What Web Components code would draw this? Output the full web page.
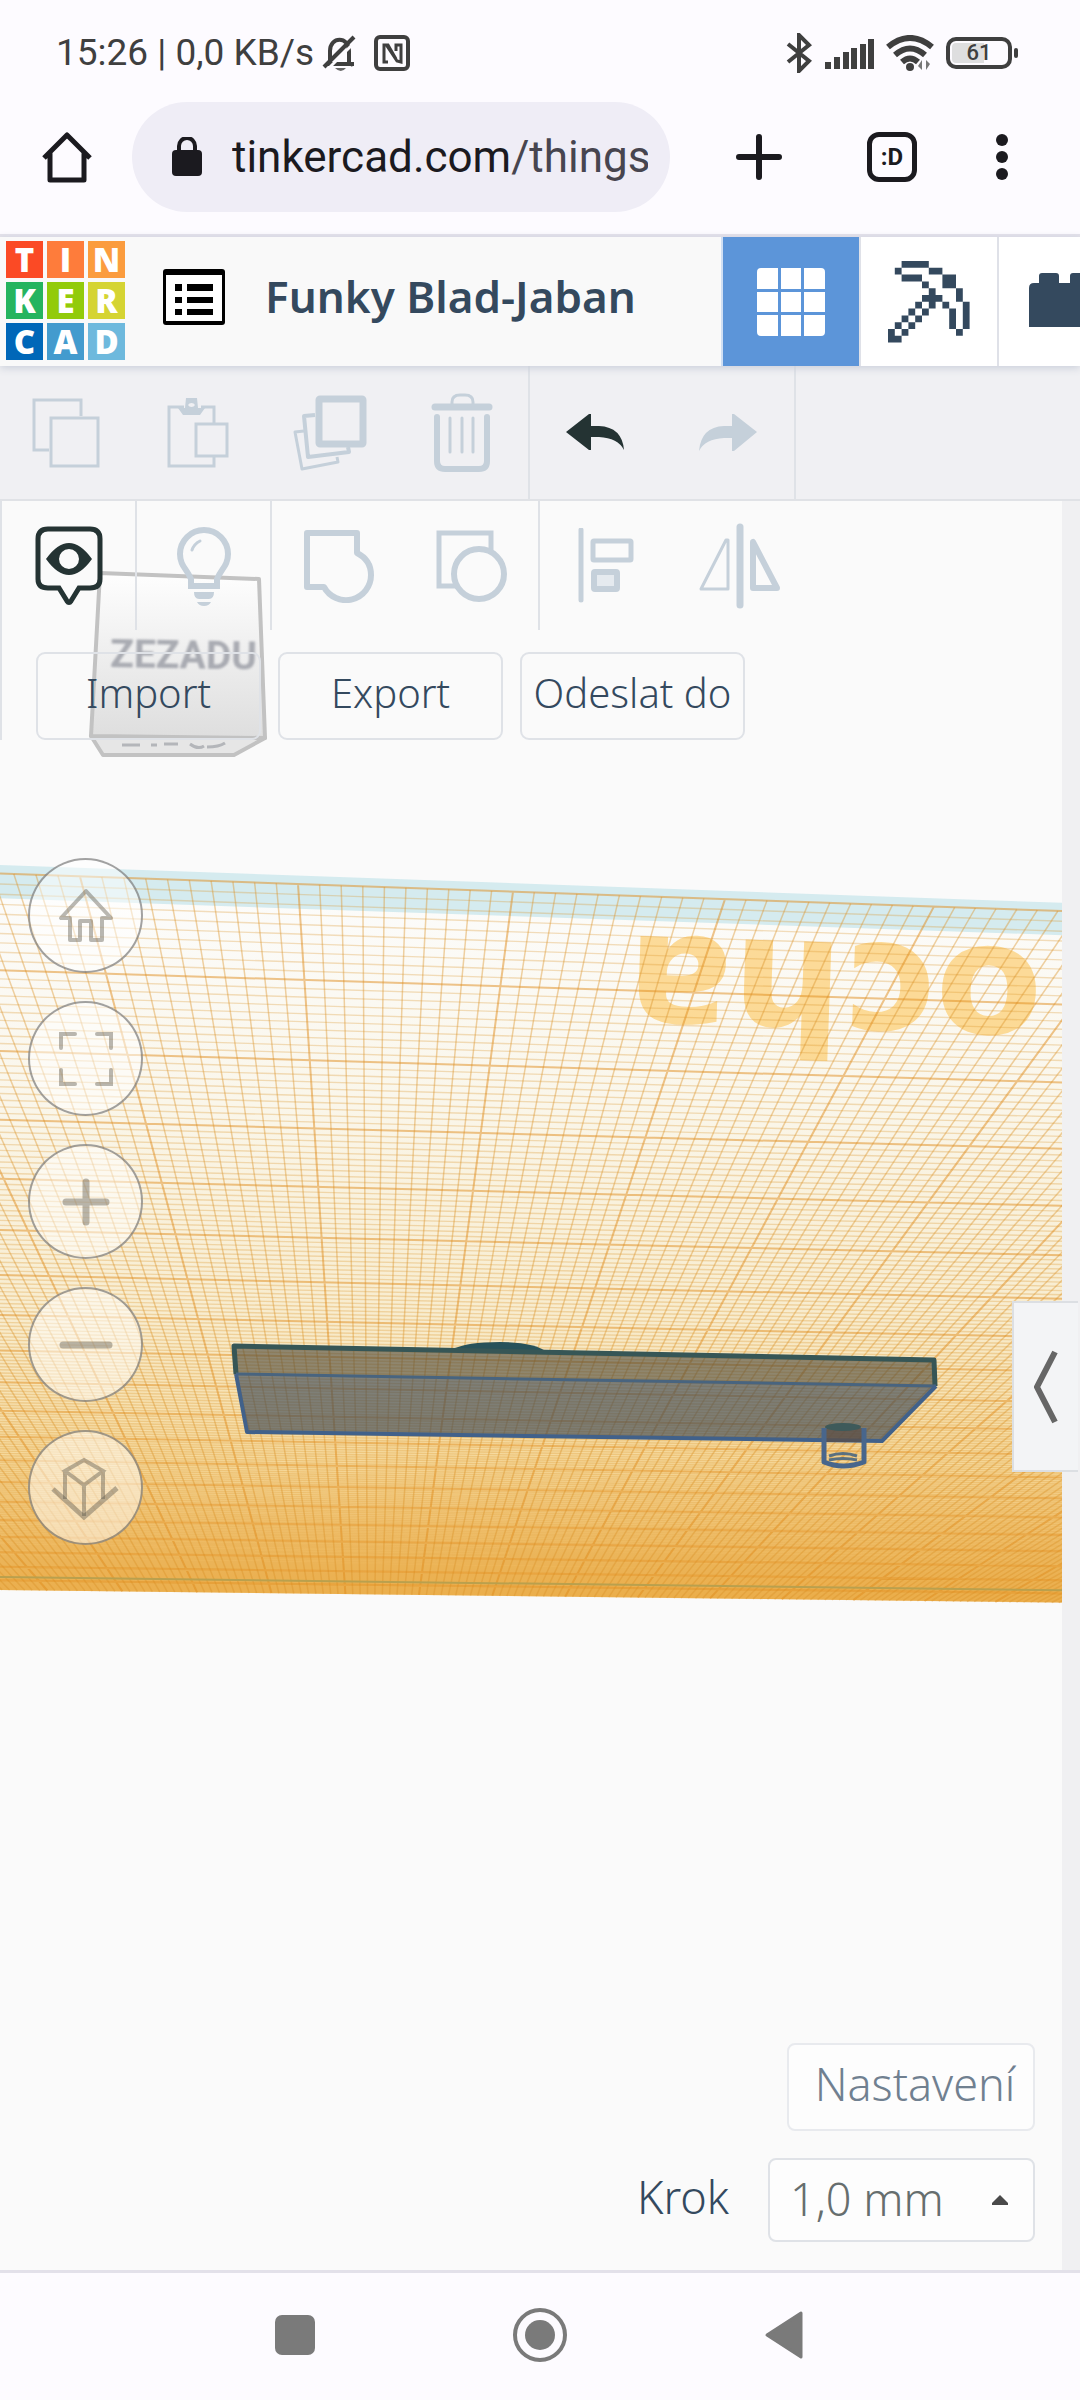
<!DOCTYPE html>
<html lang="cs">
<head>
<meta charset="utf-8">
<meta name="viewport" content="width=device-width, initial-scale=1">
<title>Funky Blad-Jaban | Tinkercad</title>
<style>
  body {
    margin: 0;
    min-height: 100vh;
    display: flex;
    flex-direction: column;
    background: #fdfbff;
    font-family: "Noto Sans", "Open Sans", sans-serif;
    --ink: #34495e;
    --off: #c5d0da;
    --line: #dfe2e7;
    --dark: #243333;
  }
  editor-stage { flex: 1; }
</style>
</head>
<body>
  <status-bar>15:26 | 0,0 KB/s</status-bar>
  <browser-bar><span slot="host">tinkercad.com</span><span slot="path">/things/</span></browser-bar>
  <app-header>Funky Blad-Jaban</app-header>
  <edit-bar></edit-bar>
  <editor-stage>
    <shape-bar slot="tools"></shape-bar>
    <camera-nav slot="camera"></camera-nav>
    <snap-settings slot="settings"></snap-settings>
  </editor-stage>
  <system-nav></system-nav>

<script>
// [width, height, markup]
const ICONS = {
  bell: [36, 40, `<path d="M5 31h27M8 30V18C8 3 27 3 27 18v12l4 2" fill="none" stroke="#3f3f3f" stroke-width="4"/><path d="M13 35h11q-5 6-11 0z" fill="#666"/><path d="M6 36 36 6" stroke="#fdfbff" stroke-width="3"/><path d="M2 34 32 4" stroke="#3f3f3f" stroke-width="4"/>`],
  nfc: [36, 36, `<rect x="2" y="2" width="32" height="32" rx="4" fill="none" stroke="#3f3f3f" stroke-width="4"/><path d="M14 27H10V10l4 0 8 14M22 16v-6h5v17l-4-1-10-15" fill="none" stroke="#3f3f3f" stroke-width="3"/>`],
  bluetooth: [26, 40, `<path d="M2 11 23 28 13 38V2L23 12 2 29" fill="none" stroke="#3f3f3f" stroke-width="4"/>`],
  signal: [50, 34, `<path d="M4 33v-7M13 33V21M22 33V16M30 33V12M39 33V8M47 33V3" stroke="#3f3f3f" stroke-width="6"/>`],
  wifi: [48, 36, `<g fill="none" stroke="#3f3f3f" stroke-width="6"><path d="M2 12Q24-6 46 12M9 20Q24 7 39 20M16 27q8-7 16 0"/></g><circle cx="24" cy="32" r="4" fill="#3f3f3f"/><path d="M36 25v10l-4-4zM40 35V25l4 4z" fill="#777"/>`],
  home: [50, 52, `<path d="M2 27 25 4l23 23M8 22v27h34V22" fill="none" stroke="#1b1a1f" stroke-width="5" stroke-linejoin="round"/>`],
  lock: [30, 40, `<rect y="13" width="30" height="26" rx="4" fill="#1b1a1f"/><path d="M7 14V9a8 8 0 0 1 16 0v5" fill="none" stroke="#1b1a1f" stroke-width="4"/>`],
  plus: [46, 46, `<path d="M23 3v40M3 23h40" stroke="#1b1a1f" stroke-width="6" stroke-linecap="round"/>`],
  dots: [12, 46, `<g fill="#1b1a1f"><circle cx="6" cy="6" r="6"/><circle cx="6" cy="23" r="6"/><circle cx="6" cy="40" r="6"/></g>`],
  list: [62, 56, `<rect width="62" height="56" rx="3"/><path fill="#fff" d="M3 6h56v46H3z"/><path d="M12 15h7v7h-7zM24 15h26v7H24zM12 28h7v6h-7zM24 28h26v6H24zM12 40h7v6h-7zM24 40h26v6H24z"/>`],
  blocks: [68, 68, `<g fill="#fff"><path d="M0 4q0-4 4-4h17v21H0zM24 0h20v21H24zM47 0h17q4 0 4 4v17H47zM0 24h21v20H0zM24 24h20v20H24zM47 24h21v20H47zM0 47h21v21H4q-4 0-4-4zM24 47h20v21H24zM47 47h21v17q0 4-4 4H47z"/></g>`],
  pickaxe: [82, 82, `<path transform="scale(6.8)" fill="#34495e" d="M2 0h4v1h-4zM1 1h1v1h-1zM6 1h2v1h-2zM2 2h3v1h-3zM8 2h2v2h-2zM5 3h1v1h-1zM6 4h1v1h-1zM10 4h1v2h-1zM5 5h3v1h-3zM4 6h1v1h-1zM6 6h1v1h-1zM8 6h1v1h-1zM11 6h1v4h-1zM3 7h1v1h-1zM5 7h1v1h-1zM9 7h1v3h-1zM2 8h1v1h-1zM4 8h1v1h-1zM1 9h1v1h-1zM3 9h1v1h-1zM0 10h1v1h-1zM2 10h1v1h-1zM10 10h1v1h-1zM0 11h2v1h-2z"/>`],
  brick: [82, 54, `<path d="M0 54V15q0-5 5-5h5V3q0-3 3-3h14q3 0 3 3v7h11V3q0-3 3-3h14q3 0 3 3v7h21v44z" fill="#34495e"/>`],
  copy: [68, 70, `<g fill="none" stroke="#c5d0da" stroke-width="3"><path d="M17 52H2V2h47v16"/><rect x="19" y="20" width="47" height="48"/></g>`],
  paste: [62, 70, `<g fill="none" stroke="#c5d0da" stroke-width="3"><path d="M17 9H2v59h45V58M47 25V9H34"/><rect x="29" y="26" width="31" height="32"/></g><path d="M11 10h7l1-10h11l1 10h7l-5 7H16zM21 7a4 4 0 0 0 7 0 4 4 0 0 0-7 0" fill="#c5d0da" fill-rule="evenodd"/>`],
  duplicate: [74, 76, `<g fill="none" stroke="#c5d0da" stroke-linejoin="round"><rect x="26" y="4" width="44" height="45" rx="1" stroke-width="7"/><path d="M22 20 11 21l4 41 41-5-1-5" stroke-width="4"/><path d="M11 36 2 37l7 37 36-7-1-5" stroke-width="3"/></g>`],
  trash: [62, 80, `<g fill="none" stroke="#c5d0da" stroke-linecap="round"><path d="M4 14h54" stroke-width="7"/><path d="M21 12V9q0-7 8-7h5q8 0 8 7v3" stroke-width="3"/><path d="M6 24v44q0 8 8 8h34q8 0 8-8V24" stroke-width="6"/><path d="M19 25v34M31 25v34M42 25v34" stroke-width="3"/></g>`],
  undo: [60, 38, `<path d="M0 18 23 0h2v12h8Q56 13 58 36 52 24 33 23h-8v13h-2z" fill="#243333"/>`],
  redo: [60, 38, `<path d="M59 18 36 0h-2v12h-8Q3 13 1 37 7 25 26 24h8v13h2z" fill="#c5d0da"/>`],
  eye: [68, 80, `<path d="M13 3h42q10 0 10 10v40q0 9-10 9H44L36 75q-2 3-4 0L24 62H13q-10 0-10-9V13Q3 3 13 3z" fill="none" stroke="#243333" stroke-width="5"/><path fill-rule="evenodd" d="M11 33q23-32 46 0-23 32-46 0M24 33a10 10 0 0 0 20 0 10 10 0 0 0-20 0" fill="#243333"/>`],
  bulb: [54, 80, `<path d="M14 60v-7C10 43 3 40 3 28a24 24 0 0 1 48 0c0 12-7 15-11 25v7z" fill="none" stroke="#c5d0da" stroke-width="6"/><path d="M15 24q2-6 8-9" fill="none" stroke="#c5d0da" stroke-width="3" stroke-linecap="round"/><path d="M17 66h20q0 7-5 7H22q-5 0-5-7M20 76h14q-2 4-7 4t-7-4" fill="#c5d0da"/>`],
  group: [70, 74, `<path d="M3 4h50v20q14 7 14 22a25 25 0 0 1-47 12H3z" fill="none" stroke="#c5d0da" stroke-width="6" stroke-linejoin="round"/>`],
  ungroup: [72, 74, `<path d="M20 57H3V4h52v19" fill="none" stroke="#c5d0da" stroke-width="5"/><circle cx="43" cy="45" r="25" fill="none" stroke="#c5d0da" stroke-width="6"/>`],
  align: [58, 76, `<g fill="none" stroke="#c5d0da"><path d="M3 2v70" stroke-width="5" stroke-linecap="round"/><rect x="15" y="13" width="38" height="19" rx="1" stroke-width="5"/><rect x="16" y="44" width="23" height="17" rx="1" fill="#e5eaef" stroke-width="6"/></g>`],
  mirror: [84, 86, `<g fill="none" stroke="#c5d0da" stroke-linejoin="round" stroke-linecap="round"><path d="M30 17v49H3l25-49z" stroke-width="3"/><path d="M42 4v78" stroke-width="7"/><path d="M55 19v46h24z" stroke-width="6"/></g>`],
  camHome: [56, 56, `<path d="M28 3 3 30h9v22h10V33h11v19h11V30h9z" fill="none" stroke-width="4" stroke-linejoin="round"/>`],
  camFit: [56, 56, `<path d="M3 17V3h14M39 3h14v14M53 39v14H39M17 53H3V39" fill="none" stroke-width="4" stroke-linecap="round"/>`],
  camIn: [56, 56, `<path d="M28 8v40M8 28h40" fill="none" stroke-width="7" stroke-linecap="round"/>`],
  camOut: [56, 56, `<path d="M5 28h46" fill="none" stroke-width="7" stroke-linecap="round"/>`],
  camOrtho: [70, 64, `<path d="m33 4 19 11-19 14L14 15zM14 15v28M52 15v28M33 29v31" fill="none" stroke-width="4"/><path d="m2 33 31 28 33-29" fill="none" stroke-width="5"/>`],
  recents: [42, 42, `<rect x="1" y="1" width="40" height="40" rx="7" fill="#7a7a7a"/>`],
  homeKey: [56, 56, `<circle cx="28" cy="28" r="25" fill="none" stroke="#7a7a7a" stroke-width="4"/><circle cx="28" cy="28" r="15" fill="#7a7a7a"/>`],
  back: [40, 50, `<path d="M3 25 37 3v44z" fill="#7a7a7a" stroke="#7a7a7a" stroke-width="3" stroke-linejoin="round"/>`],
  chevron: [24, 74, `<path d="M21 2 3 37l18 35" fill="none" stroke="#666" stroke-width="6"/>`],
  caret: [16, 10, `<path d="M8 0 16 8v2H0V8z" fill="#4a4a4a"/>`]
};

class BaseElement extends HTMLElement {
  constructor() {
    super();
    this.attachShadow({mode: 'open'});
    this.shadowRoot.innerHTML = `
      <style>
        * { box-sizing: border-box; }
        button, select { font: inherit; color: inherit; margin: 0; padding: 0; border: 0; background: none; }
        button { display: flex; align-items: center; justify-content: center; }
      </style>` + this.render();
  }

  render() {
    return '';
  }
}

class UiIcon extends HTMLElement {
  connectedCallback() {
    if (this.shadowRoot) return;
    const [w, h, body] = ICONS[this.getAttribute('name')];
    this.attachShadow({mode: 'open'}).innerHTML = `
      <style>:host { display: block; flex: none; } svg { display: block; }</style>
      <svg width="${w}" height="${h}" viewBox="0 0 ${w} ${h}" aria-hidden="true">${body}</svg>`;
  }
}

class StatusBar extends BaseElement {
  render() {
    return `
      <style>
        :host { display: flex; align-items: center; justify-content: space-between; height: 102px;
          padding: 3px 62px 0 56px; box-sizing: border-box; font-family: Roboto, sans-serif; font-size: 37px; color: #3f3f3f; }
        div { display: flex; align-items: center; }
        .left { gap: 16px; }
        .left ui-icon:first-of-type { margin-left: -8px; }
        .right { gap: 12px; }
        .battery { width: 66px; height: 32px; border: 4px solid #3f3f3f; border-radius: 10px; justify-content: center;
          font-size: 22px; font-weight: 500; background: linear-gradient(90deg, #dededf 60%, transparent 60%) content-box; padding: 2px; }
        .cap { width: 4px; height: 10px; margin-left: -10px; background: #3f3f3f; border-radius: 2px; }
      </style>
      <div class="left"><span><slot></slot></span><ui-icon name="bell"></ui-icon><ui-icon name="nfc"></ui-icon></div>
      <div class="right">
        <ui-icon name="bluetooth"></ui-icon><ui-icon name="signal"></ui-icon><ui-icon name="wifi"></ui-icon>
        <div class="battery">61</div><span class="cap"></span>
      </div>`;
  }
}

class BrowserBar extends BaseElement {
  render() {
    return `
      <style>
        :host { display: flex; align-items: flex-start; height: 135px; box-sizing: border-box; padding: 0 72px 0 42px;
          border-bottom: 3px solid #e3e1ea; font-family: Roboto, sans-serif; }
        button { height: 110px; flex: none; }
        .url { flex: 1; min-width: 0; margin: 0 66px 0 40px; padding: 0 22px 0 40px; border-radius: 55px; background: #efedf6;
          font-size: 44px; color: #1b1a1f; justify-content: flex-start; gap: 30px; }
        .text { overflow: hidden; white-space: nowrap; text-align: left; }
        .path { color: #47454f; }
        .tabs { width: 50px; height: 50px; margin: 30px 79px 0 85px; border: 5px solid #1b1a1f; border-radius: 12px;
          font-size: 24px; font-weight: 700; color: #1b1a1f; }
      </style>
      <button aria-label="Domů"><ui-icon name="home"></ui-icon></button>
      <button class="url"><ui-icon name="lock"></ui-icon>
        <span class="text"><slot name="host"></slot><span class="path"><slot name="path"></slot></span></span></button>
      <button aria-label="Nová karta"><ui-icon name="plus"></ui-icon></button>
      <button class="tabs">:D</button>
      <button aria-label="Nabídka"><ui-icon name="dots"></ui-icon></button>`;
  }
}

class TinkerLogo extends BaseElement {
  render() {
    const tiles = [['T', '#fb4a25'], ['I', '#fe7c3b'], ['N', '#fb9c3e'], ['K', '#25b45f'], ['E', '#92cb0a'],
      ['R', '#d5d433'], ['C', '#0067b8'], ['A', '#439bce'], ['D', '#6eb9dd']];
    return `
      <style>
        :host { display: block; }
        a { display: grid; grid-template-columns: repeat(3, 37px); grid-auto-rows: 37px; gap: 4px; text-decoration: none; }
        span { display: flex; align-items: center; justify-content: center; color: #fff;
          font-family: "Open Sans", "Noto Sans", sans-serif; font-size: 33px; font-weight: 800; line-height: 37px; }
      </style>
      <a href="#">${tiles.map(([c, bg]) => `<span style="background:${bg}">${c}</span>`).join('')}</a>`;
  }
}

class AppHeader extends BaseElement {
  render() {
    return `
      <style>
        :host { display: grid; grid-template-columns: 1fr 359px; height: 129px; background: #f9f9f9;
          box-shadow: 0 2px 8px #c9ced9; position: relative; z-index: 1; }
        .left { display: flex; align-items: center; padding: 0 0 2px 6px; min-width: 0; }
        .list { margin: 0 40px 8px 38px; }
        h1 { margin: 0 0 10px; font-size: 44px; line-height: 56px; font-weight: 600; color: var(--ink); white-space: nowrap; }
        nav { display: flex; overflow: hidden; }
        nav button { flex: none; width: 138px; background: #fff; border-left: 2px solid #dfe1e8; }
        nav .on { background: #5c95d9; border-color: #cfdff4; }
        nav button:last-child { justify-content: flex-start; padding-left: 30px; padding-bottom: 4px; }
      </style>
      <div class="left">
        <tinker-logo></tinker-logo>
        <button class="list" aria-label="Návrhy"><ui-icon name="list"></ui-icon></button>
        <h1><slot></slot></h1>
      </div>
      <nav>
        <button class="on" aria-label="3D návrh"><ui-icon name="blocks"></ui-icon></button>
        <button aria-label="Kostky"><ui-icon name="pickaxe"></ui-icon></button>
        <button aria-label="Cihly"><ui-icon name="brick"></ui-icon></button>
      </nav>`;
  }
}

class EditBar extends BaseElement {
  render() {
    return `
      <style>
        :host { display: flex; height: 135px; box-sizing: border-box; background: #f0f0f3; border-bottom: 2px solid #e0e2e6; }
        div { display: flex; border-right: 2px solid var(--line); }
        button { width: 132px; }
      </style>
      <div>
        <button aria-label="Kopírovat"><ui-icon name="copy"></ui-icon></button>
        <button aria-label="Vložit"><ui-icon name="paste"></ui-icon></button>
        <button aria-label="Duplikovat"><ui-icon name="duplicate"></ui-icon></button>
        <button aria-label="Odstranit"><ui-icon name="trash"></ui-icon></button>
      </div>
      <div>
        <button aria-label="Zpět"><ui-icon name="undo"></ui-icon></button>
        <button aria-label="Znovu"><ui-icon name="redo"></ui-icon></button>
      </div>`;
  }
}

class ShapeBar extends BaseElement {
  render() {
    return `
      <style>
        :host { display: block; border-left: 2px solid var(--line); }
        div { display: flex; }
        .tools { height: 129px; }
        .tools span { display: flex; border-right: 2px solid var(--line); }
        .tools span:last-child { border: 0; }
        .tools button { width: 133px; }
        .files { gap: 17px; padding: 22px 0 0 34px; }
        .files button { width: 225px; height: 88px; padding-bottom: 8px; border: 2px solid var(--line); border-radius: 9px;
          font-size: 40px; font-weight: 300; color: var(--ink); white-space: nowrap; }
      </style>
      <div class="tools">
        <span><button aria-label="Zobrazit"><ui-icon name="eye"></ui-icon></button></span>
        <span><button aria-label="Skryté"><ui-icon name="bulb"></ui-icon></button></span>
        <span><button aria-label="Seskupit"><ui-icon name="group"></ui-icon></button>
        <button aria-label="Zrušit seskupení"><ui-icon name="ungroup"></ui-icon></button></span>
        <span><button aria-label="Zarovnat"><ui-icon name="align"></ui-icon></button>
        <button aria-label="Zrcadlit"><ui-icon name="mirror"></ui-icon></button></span>
      </div>
      <div class="files"><button>Import</button><button>Export</button><button>Odeslat do</button></div>`;
  }
}

class CameraNav extends BaseElement {
  render() {
    const items = [['camHome', 'Výchozí pohled'], ['camFit', 'Přizpůsobit'], ['camIn', 'Přiblížit'], ['camOut', 'Oddálit'], ['camOrtho', 'Ortografický']];
    return `
      <style>
        :host { display: flex; flex-direction: column; gap: 28px; width: 115px; margin: 118px 0 0 28px; }
        button { width: 115px; height: 115px; border-radius: 50%; background: rgba(255, 255, 255, .5);
          border: 2px solid rgba(70, 70, 70, .5); }
        ui-icon { stroke: rgba(90, 85, 75, .42); }
      </style>
      ${items.map(([icon, label]) => `<button aria-label="${label}"><ui-icon name="${icon}"></ui-icon></button>`).join('')}`;
  }
}

class SnapSettings extends BaseElement {
  render() {
    return `
      <style>
        :host { display: flex; flex-direction: column; align-items: flex-end; gap: 27px; margin-top: auto;
          padding: 0 27px 28px 0; font-size: 45px; font-weight: 300; }
        .settings { width: 248px; height: 88px; padding: 0 0 8px 8px; border: 2px solid #e8eaee; border-radius: 8px; background: #fdfdfd; color: #708090; }
        .row { display: flex; align-items: center; gap: 39px; }
        label { color: var(--ink); padding-bottom: 8px; }
        .box { display: grid; align-items: center; width: 267px; height: 84px; border: 2px solid var(--line); border-radius: 8px; background: #fdfdfd; }
        select, .box ui-icon { grid-area: 1 / 1; }
        select { appearance: none; width: 100%; height: 80px; padding: 0 0 4px 20px; color: #666e6e; }
        .box ui-icon { justify-self: end; margin-right: 25px; pointer-events: none; }
      </style>
      <button class="settings">Nastavení</button>
      <div class="row">
        <label for="snap">Krok</label>
        <span class="box"><select id="snap"><option>1,0 mm</option></select><ui-icon name="caret"></ui-icon></span>
      </div>`;
  }
}

// Workplane in perspective: u counts columns, v counts rows (10 mm each)
const project = (u, v) => {
  const a = 0.0977 * v;
  const b = 0.00718 * u;
  const w = 1 + a + b;
  return [(298 + 370 * a + 30457 * b) / w, (884 + 1962 * a + 1954 * b) / w];
};

const segment = (u1, v1, u2, v2) => {
  const fmt = p => p.map(n => n.toFixed(1)).join(' ');
  return `M${fmt(project(u1, v1))}L${fmt(project(u2, v2))}`;
};

class WorkPlane extends BaseElement {
  render() {
    const uMin = -6, uMax = 13, vMax = 19.75;
    let minor = '', rows = '', major = '';
    for (let i = uMin * 10; i <= uMax * 10; i++) {
      if (i % 10) minor += segment(i / 10, 0, i / 10, vMax);
      else major += segment(i / 10, 0, i / 10, vMax);
    }
    for (let i = 0; i <= vMax * 10; i++) {
      if (i % 10) rows += segment(uMin, i / 10, uMax, i / 10);
      else major += segment(uMin, i / 10, uMax, i / 10);
    }
    const quad = (v1, v2) => segment(uMin, v1, uMax, v1) + segment(uMax, v2, uMin, v2).replace('M', 'L') + 'z';

    return `
      <style>
        :host { display: block; }
        svg { display: block; width: 100%; height: 100%; }
        .cube-text { font: 700 39px Roboto, sans-serif; fill: #a9abb2; filter: blur(1px); }
        .plane-text { font: 700 156px "DejaVu Sans", sans-serif; fill: #fdc860; opacity: .62; }
      </style>
      <svg viewBox="0 501 1062 1769" preserveAspectRatio="xMinYMin slice">
        <defs>
          <linearGradient id="glow" gradientUnits="userSpaceOnUse" x1="0" y1="890" x2="0" y2="1600">
            <stop offset="0" stop-color="#fcfcfb"/><stop offset=".3" stop-color="#faf6ea"/>
            <stop offset=".6" stop-color="#f8ecce"/><stop offset=".8" stop-color="#f6da9e"/><stop offset="1" stop-color="#f2b858"/>
          </linearGradient>
          <linearGradient id="face" x1="0" y1="0" x2="0" y2="1">
            <stop offset="0" stop-color="#fefefe"/><stop offset="1" stop-color="#dedede"/>
          </linearGradient>
        </defs>

        <path d="${quad(0, vMax)}" fill="url(#glow)"/>
        <path d="${quad(-0.08, 0.24)}" fill="#d5ebef"/>
        <text class="plane-text" transform="translate(1044 950) rotate(182)">ocha</text>
        <path d="${minor}" stroke="#dc942a" stroke-opacity=".42" stroke-width="1.5" fill="none"/>
        <path d="${rows}" stroke="#dc942a" stroke-opacity=".3" stroke-width="1.4" fill="none"/>
        <path d="${major}" stroke="#e08c1c" stroke-opacity=".5" stroke-width="2" fill="none"/>
        <path d="${segment(uMin, 18.75, uMax, 18.75)}" stroke="#b9a04e" stroke-width="2"/>

        <g stroke-linejoin="round">
          <path d="M454 1349q12-7 46-7t47 10z" fill="#28525a"/>
          <path d="M233 1345 935 1359 936 1386 236 1374z" fill="#4a4638" fill-opacity=".6"/>
          <path d="M236 1374 936 1386 882 1442 246 1433z" fill="#3a4654" fill-opacity=".64"/>
          <path d="M236 1374 234 1346 934 1360 935 1386" fill="none" stroke="#365656" stroke-width="5"/>
          <path d="M236 1374 936 1386" stroke="#48647f" stroke-width="3"/>
          <path d="M236 1374 247 1432 882 1441 936 1386" fill="none" stroke="#41618a" stroke-width="4"/>
          <path d="M824 1428h38v14h-38z" fill="#5b4d45" fill-opacity=".7"/>
          <ellipse cx="843" cy="1427" rx="18" ry="4" fill="#3e5a5a"/>
          <path d="M824 1428v34q19 8 40 0v-34" fill="none" stroke="#48668c" stroke-width="5"/>
          <path d="M829 1456q14-5 28 0M829 1460q14-3 28 0" fill="none" stroke="#5a7080" stroke-width="3"/>
        </g>

        <g stroke="#c2c2c2" stroke-width="4" stroke-linejoin="round">
          <path d="M91 736 265 738 234 755 103 755z" fill="#e6e6e6"/>
          <path d="M100 573 259 579 265 738 91 736z" fill="url(#face)"/>
        </g>
        <path d="M122 745h18M151 745h6M164 744h14M190 744q8 6 14 2M207 747q12 0 18-4" fill="none" stroke="#b4b6ba" stroke-width="3"/>
        <text class="cube-text" x="110" y="667" transform="rotate(1 110 667)">ZEZADU</text>
      </svg>`;
  }
}

class EditorStage extends BaseElement {
  render() {
    return `
      <style>
        :host { display: grid; grid-template-columns: 1fr 18px; position: relative; background: #f0f0f2; }
        main { position: relative; display: flex; flex-direction: column; background: #fafafa; overflow: hidden; }
        work-plane { position: absolute; inset: 0; }
        slot { display: contents; }
        ::slotted(*) { position: relative; }
        .handle { position: absolute; right: 2px; top: 800px; width: 66px; height: 171px; background: #f3f4f6;
          border: 2px solid #dcdfe3; border-right: 0; }
      </style>
      <main>
        <work-plane></work-plane>
        <slot name="tools"></slot>
        <slot name="camera"></slot>
        <slot name="settings"></slot>
      </main>
      <button class="handle" aria-label="Panel tvarů"><ui-icon name="chevron"></ui-icon></button>`;
  }
}

class SystemNav extends BaseElement {
  render() {
    return `
      <style>
        :host { display: flex; align-items: center; justify-content: center; gap: 196px; height: 130px; box-sizing: border-box;
          padding: 0 2px 3px 0; border-top: 3px solid #e3e1ea; background: #fdfbff; }
      </style>
      <button aria-label="Poslední aplikace"><ui-icon name="recents"></ui-icon></button>
      <button aria-label="Domů"><ui-icon name="homeKey"></ui-icon></button>
      <button aria-label="Zpět"><ui-icon name="back"></ui-icon></button>`;
  }
}

customElements.define('ui-icon', UiIcon);
customElements.define('status-bar', StatusBar);
customElements.define('browser-bar', BrowserBar);
customElements.define('tinker-logo', TinkerLogo);
customElements.define('app-header', AppHeader);
customElements.define('edit-bar', EditBar);
customElements.define('shape-bar', ShapeBar);
customElements.define('camera-nav', CameraNav);
customElements.define('snap-settings', SnapSettings);
customElements.define('work-plane', WorkPlane);
customElements.define('editor-stage', EditorStage);
customElements.define('system-nav', SystemNav);
</script>
</body>
</html>
